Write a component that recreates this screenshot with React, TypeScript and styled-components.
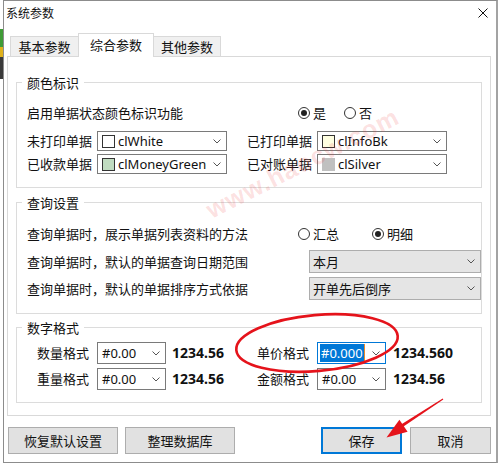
import React from 'react';
import styled, { createGlobalStyle, css } from 'styled-components';

const CJK = `"Noto Sans CJK SC", "Noto Sans", sans-serif`;
const UI = `"Noto Sans", "Noto Sans CJK SC", sans-serif`;

const GlobalStyle = createGlobalStyle`
  * { box-sizing: border-box; }
  html, body { margin: 0; padding: 0; background: #ffffff; }
  body { font-family: ${CJK}; color: #1a1a1a; overflow: hidden; }
`;

const Page = styled.div`
  position: relative;
  width: 500px;
  height: 465px;
  display: flex;
  background: #fff;
`;

const DesktopEdge = styled.div`
  width: 3px;
  flex-shrink: 0;
  display: flex;
  flex-direction: column;
`;

const EdgeSeg = styled.div<{ $h: number; $c: string }>`
  height: ${p => p.$h}px;
  background: ${p => p.$c};
`;

const Window = styled.div`
  width: 495px;
  height: 463px;
  flex-shrink: 0;
  border: 1px solid #8c8c8c;
  border-right: 2px solid #a3a3a3;
  background: #fff;
  display: flex;
  flex-direction: column;
`;

const TitleBar = styled.div`
  height: 23px;
  display: flex;
  align-items: center;
  justify-content: space-between;
  padding: 0 8px 0 2px;
  font-size: 12px;
  line-height: 16px;
  color: #111;
`;

const Body = styled.div`
  flex: 1;
  display: flex;
  flex-direction: column;
  padding: 9px 5px 8px 3px;
`;

const TabStrip = styled.div`
  position: relative;
  z-index: 1;
  display: flex;
  align-items: flex-start;
  height: 24px;
  margin-bottom: -1px;
  padding-left: 3px;
`;

const Tab = styled.div<{ $w: number; $active?: boolean }>`
  width: ${p => p.$w}px;
  height: ${p => (p.$active ? 24 : 20)}px;
  margin-top: ${p => (p.$active ? 0 : 3)}px;
  margin-right: -1px;
  display: flex;
  align-items: center;
  justify-content: center;
  padding-bottom: ${p => (p.$active ? 2 : 0)}px;
  border: 1px solid #d9d9d9;
  border-bottom: none;
  background: ${p => (p.$active ? '#ffffff' : '#f0f0f0')};
  font-size: 13px;
  line-height: 17px;
  color: #111;
  position: relative;
  z-index: ${p => (p.$active ? 2 : 1)};
`;

const Panel = styled.div`
  border: 1px solid #d9d9d9;
  background: #fff;
  padding: 17px 8px 12px;
  display: flex;
  flex-direction: column;
`;

const GroupBox = styled.fieldset<{ $mt?: number }>`
  margin: ${p => p.$mt ?? 0}px 0 0;
  padding: 0 0 0 5px;
  border: 1px solid #dcdcdc;
  min-width: 0;
`;

const Legend = styled.legend`
  padding: 0 5px;
  font-size: 13px;
  line-height: 17px;
  height: 17px;
  color: #111;
`;

const GroupBody = styled.div<{ $pt: number; $pb: number }>`
  display: flex;
  flex-direction: column;
  padding: ${p => p.$pt}px 0 ${p => p.$pb}px 5px;
`;

const Row = styled.div<{ $h: number; $mt?: number; $indent?: number }>`
  display: flex;
  align-items: center;
  height: ${p => p.$h}px;
  margin-top: ${p => p.$mt ?? 0}px;
  padding-left: ${p => p.$indent ?? 0}px;
`;

const Label = styled.span<{ $w?: number; $ml?: number; $grow?: boolean }>`
  flex-shrink: 0;
  ${p => (p.$w ? css`width: ${p.$w}px;` : '')}
  ${p => (p.$grow ? css`flex: 1;` : '')}
  margin-left: ${p => p.$ml ?? 0}px;
  font-size: 13px;
  line-height: 18px;
  white-space: nowrap;
  color: #111;
`;

const RadioOption = styled.label<{ $w?: number }>`
  display: flex;
  align-items: center;
  gap: 3px;
  ${p => (p.$w ? css`width: ${p.$w}px;` : '')}
  font-size: 13px;
  line-height: 18px;
  color: #111;
`;

const RadioCircle = styled.span<{ $checked?: boolean }>`
  width: 12px;
  height: 12px;
  border: 1px solid #333;
  border-radius: 50%;
  background: #fff;
  display: grid;
  place-items: center;
  &::after {
    content: '';
    width: 6px;
    height: 6px;
    border-radius: 50%;
    background: ${p => (p.$checked ? '#222' : 'transparent')};
  }
`;

type Variant = 'edit' | 'list' | 'focus';

const Combo = styled.div<{ $w: number; $h: number; $variant: Variant }>`
  width: ${p => p.$w}px;
  height: ${p => p.$h}px;
  flex-shrink: 0;
  display: flex;
  align-items: center;
  padding-left: ${p => (p.$variant === 'list' ? 3 : 4)}px;
  border: 1px solid
    ${p => (p.$variant === 'list' ? '#adadad' : p.$variant === 'focus' ? '#0078d7' : '#7a7a7a')};
  background: ${p => (p.$variant === 'list' ? '#e5e5e5' : '#ffffff')};
`;

const Swatch = styled.span<{ $c: string; $border: string }>`
  width: 13px;
  height: 13px;
  flex-shrink: 0;
  margin-right: 3px;
  background: ${p => p.$c};
  border: 1px solid ${p => p.$border};
`;

const ComboText = styled.span<{ $cjk?: boolean }>`
  font-family: ${p => (p.$cjk ? CJK : UI)};
  font-size: 13px;
  line-height: 17px;
  color: #111;
  white-space: nowrap;
`;

const Selected = styled.span`
  display: inline-flex;
  align-items: center;
  height: 18px;
  padding: 0 1px;
  margin-left: -2px;
  background: #0078d7;
  color: #fff;
  font-family: ${UI};
  font-size: 13px;
  line-height: 17px;
  border-right: 1px solid #e8892e;
`;

const ChevronBox = styled.span`
  margin-left: auto;
  margin-right: 5px;
  display: flex;
  align-items: center;
`;

const Value = styled.span<{ $ml: number; $w?: number }>`
  margin-left: ${p => p.$ml}px;
  ${p => (p.$w ? css`width: ${p.$w}px;` : '')}
  flex-shrink: 0;
  font-family: ${UI};
  font-weight: 700;
  font-size: 14px;
  line-height: 18px;
  color: #111;
`;

const ButtonRow = styled.div`
  display: flex;
  align-items: center;
  margin-top: 11px;
  padding-left: 1px;
  gap: 7px;
`;

const RightButtons = styled.div`
  margin-left: auto;
  display: flex;
  gap: 8px;
`;

const Button = styled.button<{ $w: number; $primary?: boolean }>`
  width: ${p => p.$w}px;
  height: 27px;
  padding: 0;
  background: #e1e1e1;
  border: 1px solid ${p => (p.$primary ? '#0078d7' : '#adadad')};
  box-shadow: ${p => (p.$primary ? 'inset 0 0 0 1px #0078d7' : 'none')};
  font-family: ${CJK};
  font-size: 13px;
  line-height: 17px;
  color: #111;
`;

const Overlay = styled.svg`
  position: absolute;
  left: 0;
  top: 0;
  width: 500px;
  height: 465px;
  pointer-events: none;
  z-index: 5;
`;

const Watermark = styled.span`
  position: absolute;
  left: 208px;
  top: 197px;
  transform: rotate(-27deg);
  transform-origin: left center;
  font-family: "Liberation Sans", sans-serif;
  font-weight: 700;
  font-size: 25px;
  letter-spacing: 1px;
  color: rgba(236, 70, 70, 0.17);
  pointer-events: none;
  white-space: nowrap;
  z-index: 4;
`;

const Chevron = () => (
  <ChevronBox>
    <svg width="8" height="5" viewBox="0 0 8 5">
      <polyline points="0.5,0.5 4,4 7.5,0.5" fill="none" stroke="#555" strokeWidth="1" />
    </svg>
  </ChevronBox>
);

const CloseIcon = () => (
  <svg width="10" height="10" viewBox="0 0 10 10">
    <path d="M0.5 0.5 L9.5 9.5 M9.5 0.5 L0.5 9.5" stroke="#111" strokeWidth="1" />
  </svg>
);

const Radio = ({ label, checked, w }: { label: string; checked?: boolean; w?: number }) => (
  <RadioOption $w={w}>
    <RadioCircle $checked={checked} />
    {label}
  </RadioOption>
);

const ColorCombo = ({ color, border, name }: { color: string; border: string; name: string }) => (
  <Combo $w={130} $h={20} $variant="edit">
    <Swatch $c={color} $border={border} />
    <ComboText>{name}</ComboText>
    <Chevron />
  </Combo>
);

const FormatCombo = ({ text, focus }: { text: string; focus?: boolean }) => (
  <Combo $w={69} $h={22} $variant={focus ? 'focus' : 'edit'}>
    {focus ? <Selected>{text}</Selected> : <ComboText>{text}</ComboText>}
    <Chevron />
  </Combo>
);

const ListCombo = ({ text }: { text: string }) => (
  <Combo $w={172} $h={23} $variant="list">
    <ComboText $cjk>{text}</ComboText>
    <Chevron />
  </Combo>
);

export default function App() {
  return (
    <>
      <GlobalStyle />
      <Page>
        <DesktopEdge>
          <EdgeSeg $h={29} $c="#ffffff" />
          <EdgeSeg $h={18} $c="#3f9b36" />
          <EdgeSeg $h={10} $c="#e0b21c" />
          <EdgeSeg $h={22} $c="#3a3a3a" />
        </DesktopEdge>
        <Window>
          <TitleBar>
            <span>系统参数</span>
            <CloseIcon />
          </TitleBar>
          <Body>
            <TabStrip>
              <Tab $w={69}>基本参数</Tab>
              <Tab $w={76} $active>综合参数</Tab>
              <Tab $w={68}>其他参数</Tab>
            </TabStrip>
            <Panel>
              <GroupBox>
                <Legend>颜色标识</Legend>
                <GroupBody $pt={12} $pb={13}>
                  <Row $h={20}>
                    <Label $w={271}>启用单据状态颜色标识功能</Label>
                    <Radio label="是" checked w={46} />
                    <Radio label="否" />
                  </Row>
                  <Row $h={20} $mt={8}>
                    <Label $w={70}>未打印单据</Label>
                    <ColorCombo color="#ffffff" border="#333" name="clWhite" />
                    <Label $w={70} $ml={20}>已打印单据</Label>
                    <ColorCombo color="#ffffe1" border="#333" name="clInfoBk" />
                  </Row>
                  <Row $h={20} $mt={3}>
                    <Label $w={70}>已收款单据</Label>
                    <ColorCombo color="#c0dcc0" border="#333" name="clMoneyGreen" />
                    <Label $w={70} $ml={20}>已对账单据</Label>
                    <ColorCombo color="#c0c0c0" border="#c0c0c0" name="clSilver" />
                  </Row>
                </GroupBody>
              </GroupBox>

              <GroupBox $mt={6}>
                <Legend>查询设置</Legend>
                <GroupBody $pt={13} $pb={13}>
                  <Row $h={20}>
                    <Label $w={271}>查询单据时，展示单据列表资料的方法</Label>
                    <Radio label="汇总" w={74} />
                    <Radio label="明细" checked />
                  </Row>
                  <Row $h={23} $mt={6}>
                    <Label $grow>查询单据时，默认的单据查询日期范围</Label>
                    <ListCombo text="本月" />
                  </Row>
                  <Row $h={23} $mt={4}>
                    <Label $grow>查询单据时，默认的单据排序方式依据</Label>
                    <ListCombo text="开单先后倒序" />
                  </Row>
                </GroupBody>
              </GroupBox>

              <GroupBox $mt={5}>
                <Legend>数字格式</Legend>
                <GroupBody $pt={6} $pb={12}>
                  <Row $h={22} $indent={10}>
                    <Label $w={60}>数量格式</Label>
                    <FormatCombo text="#0.00" />
                    <Value $ml={6} $w={85}>1234.56</Value>
                    <Label $w={60}>单价格式</Label>
                    <FormatCombo text="#0.000" focus />
                    <Value $ml={7}>1234.560</Value>
                  </Row>
                  <Row $h={22} $mt={4} $indent={10}>
                    <Label $w={60}>重量格式</Label>
                    <FormatCombo text="#0.00" />
                    <Value $ml={6} $w={85}>1234.56</Value>
                    <Label $w={60}>金额格式</Label>
                    <FormatCombo text="#0.00" />
                    <Value $ml={7}>1234.56</Value>
                  </Row>
                </GroupBody>
              </GroupBox>
            </Panel>

            <ButtonRow>
              <Button $w={110}>恢复默认设置</Button>
              <Button $w={110}>整理数据库</Button>
              <RightButtons>
                <Button $w={81} $primary>保存</Button>
                <Button $w={81}>取消</Button>
              </RightButtons>
            </ButtonRow>
          </Body>
        </Window>

        <Watermark>www.haocw.com</Watermark>

        <Overlay viewBox="0 0 500 465">
          <ellipse
            cx="317"
            cy="343"
            rx="81"
            ry="28"
            transform="rotate(-5 317 343)"
            fill="none"
            stroke="#e5131b"
            strokeWidth="2.6"
          />
          <polygon
            points="443.3,399.4 442.7,398.6 400.3,425.0 402.0,427.5"
            fill="#e5131b"
          />
          <polygon points="386.5,437.5 399.4,419.8 407.6,431.8" fill="#e5131b" />
        </Overlay>
      </Page>
    </>
  );
}
